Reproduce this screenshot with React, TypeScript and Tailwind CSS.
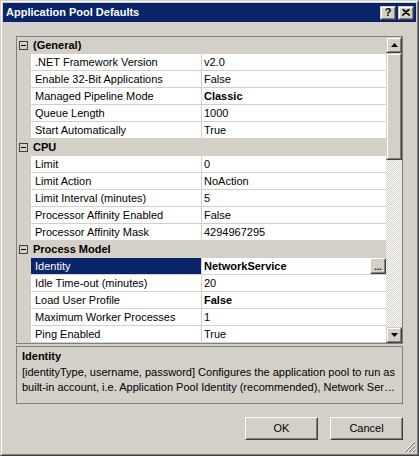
import React from "react";

type Row =
	| { kind: "cat"; name: string }
	| { kind: "prop"; name: string; value: string; bold?: boolean; selected?: boolean };

const rows: Row[] = [
	{ kind: "cat", name: "(General)" },
	{ kind: "prop", name: ".NET Framework Version", value: "v2.0" },
	{ kind: "prop", name: "Enable 32-Bit Applications", value: "False" },
	{ kind: "prop", name: "Managed Pipeline Mode", value: "Classic", bold: true },
	{ kind: "prop", name: "Queue Length", value: "1000" },
	{ kind: "prop", name: "Start Automatically", value: "True" },
	{ kind: "cat", name: "CPU" },
	{ kind: "prop", name: "Limit", value: "0" },
	{ kind: "prop", name: "Limit Action", value: "NoAction" },
	{ kind: "prop", name: "Limit Interval (minutes)", value: "5" },
	{ kind: "prop", name: "Processor Affinity Enabled", value: "False" },
	{ kind: "prop", name: "Processor Affinity Mask", value: "4294967295" },
	{ kind: "cat", name: "Process Model" },
	{ kind: "prop", name: "Identity", value: "NetworkService", bold: true, selected: true },
	{ kind: "prop", name: "Idle Time-out (minutes)", value: "20" },
	{ kind: "prop", name: "Load User Profile", value: "False", bold: true },
	{ kind: "prop", name: "Maximum Worker Processes", value: "1" },
	{ kind: "prop", name: "Ping Enabled", value: "True" },
];

// classic 3D raised box, "button" variant has white outer highlight
const Raised: React.FC<{
	className?: string;
	button?: boolean;
	children?: React.ReactNode;
	inner?: string;
}> = ({ className = "", button, children, inner = "" }) => (
	<div
		className={`border border-r-[#404040] border-b-[#404040] ${
			button ? "border-t-white border-l-white" : "border-t-[#d4d0c8] border-l-[#d4d0c8]"
		} ${className}`}
	>
		<div
			className={`flex h-full w-full border border-r-[#808080] border-b-[#808080] bg-[#d4d0c8] ${
				button ? "border-t-[#d4d0c8] border-l-[#d4d0c8]" : "border-t-white border-l-white"
			} ${inner}`}
		>
			{children}
		</div>
	</div>
);

const Arrow: React.FC<{ down?: boolean }> = ({ down }) => (
	<svg width="7" height="4" viewBox="0 0 7 4">
		{down ? <polygon points="0,0 7,0 3.5,4" fill="#000" /> : <polygon points="3.5,0 7,4 0,4" fill="#000" />}
	</svg>
);

export default function App() {
	return (
		<div className="h-[456px] w-[419px] border border-t-[#d4d0c8] border-l-[#d4d0c8] border-r-[#404040] border-b-[#404040] font-['Liberation_Sans',Arial,sans-serif] text-[11px] leading-none text-black">
			<div className="flex h-full w-full flex-col border border-t-white border-l-white border-r-[#808080] border-b-[#808080] bg-[#d4d0c8] p-px">
				{/* title bar */}
				<div className="flex h-[19px] shrink-0 items-center bg-[#0a246a] pl-[3px] pr-[2px]">
					<span className="flex-1 font-bold text-white">Application Pool Defaults</span>
					<Raised className="h-[14px] w-[16px]" inner="items-center justify-center">
						<span className="text-[11px] font-bold">?</span>
					</Raised>
					<Raised className="ml-[2px] h-[14px] w-[16px]" inner="items-center justify-center">
						<svg width="8" height="7" viewBox="0 0 8 7">
							<path d="M0.5 0.5 L7.5 6.5 M7.5 0.5 L0.5 6.5 M1.5 0.5 L8 6.5 M6.5 0.5 L0 6.5" stroke="#000" strokeWidth="1.2" />
						</svg>
					</Raised>
				</div>

				<div className="flex flex-1 flex-col px-[13px] pt-[14px]">
					{/* property grid */}
					<div className="flex h-[308px] border border-[#808080] bg-[#d4d0c8]">
						<div className="flex w-[369px] flex-col overflow-hidden">
							{rows.map((r, i) =>
								r.kind === "cat" ? (
									<div key={i} className="flex h-[17px] shrink-0 items-center">
										<div className="ml-[2px] flex h-[9px] w-[9px] items-center justify-center border border-[#404040]">
											<div className="h-px w-[5px] bg-black" />
										</div>
										<span className="ml-[5px] font-bold">{r.name}</span>
									</div>
								) : (
									<div key={i} className="flex h-[17px] shrink-0 border-b border-[#d4d0c8]">
										<div className="w-[14px]" />
										<div
											className={`flex w-[170px] items-center pl-[4px] ${
												r.selected ? "bg-[#0a246a] text-white" : "bg-white"
											}`}
										>
											{r.name}
										</div>
										<div className="w-px bg-[#d4d0c8]" />
										<div className={`flex flex-1 items-center bg-white pl-[2px] ${r.bold ? "font-bold" : ""}`}>
											<span className="flex-1">{r.value}</span>
											{r.selected && (
												<Raised button className="h-[16px] w-[16px]" inner="items-end justify-center">
													<span className="text-[9px] leading-[9px]">...</span>
												</Raised>
											)}
										</div>
									</div>
								),
							)}
						</div>
						{/* scrollbar */}
						<div className="flex w-[16px] flex-col bg-[repeating-conic-gradient(#d4d0c8_0_25%,#ffffff_0_50%)] bg-[length:2px_2px]">
							<Raised className="h-[16px] shrink-0" inner="items-center justify-center">
								<Arrow />
							</Raised>
							<Raised className="h-[107px] shrink-0" />
							<div className="flex-1" />
							<Raised className="h-[16px] shrink-0" inner="items-center justify-center">
								<Arrow down />
							</Raised>
						</div>
					</div>

					{/* description */}
					<div className="mt-[2px] h-[58px] border border-[#808080] px-[5px] pt-[4px]">
						<div className="h-[14px] font-bold">Identity</div>
						<div className="overflow-hidden whitespace-nowrap leading-[15px]">
							[identityType, username, password] Configures the application pool to run as
						</div>
						<div className="overflow-hidden whitespace-nowrap leading-[15px]">
							built-in account, i.e. Application Pool Identity (recommended), Network Ser…
						</div>
					</div>

					{/* buttons */}
					<div className="mt-[13px] flex justify-end gap-[12px]">
						<Raised button className="h-[23px] w-[73px]" inner="items-center justify-center">
							OK
						</Raised>
						<Raised button className="h-[23px] w-[73px]" inner="items-center justify-center">
							Cancel
						</Raised>
					</div>
				</div>

				{/* resize grip */}
				<div className="flex justify-end">
					<svg width="12" height="12" viewBox="0 0 12 12" className="-mt-[12px]">
						<path d="M11 1 L1 11 M11 5 L5 11 M11 9 L9 11" stroke="#808080" strokeWidth="1.2" />
						<path d="M11 0 L0 11 M11 4 L4 11 M11 8 L8 11" stroke="#ffffff" strokeWidth="1" />
					</svg>
				</div>
			</div>
		</div>
	);
}
